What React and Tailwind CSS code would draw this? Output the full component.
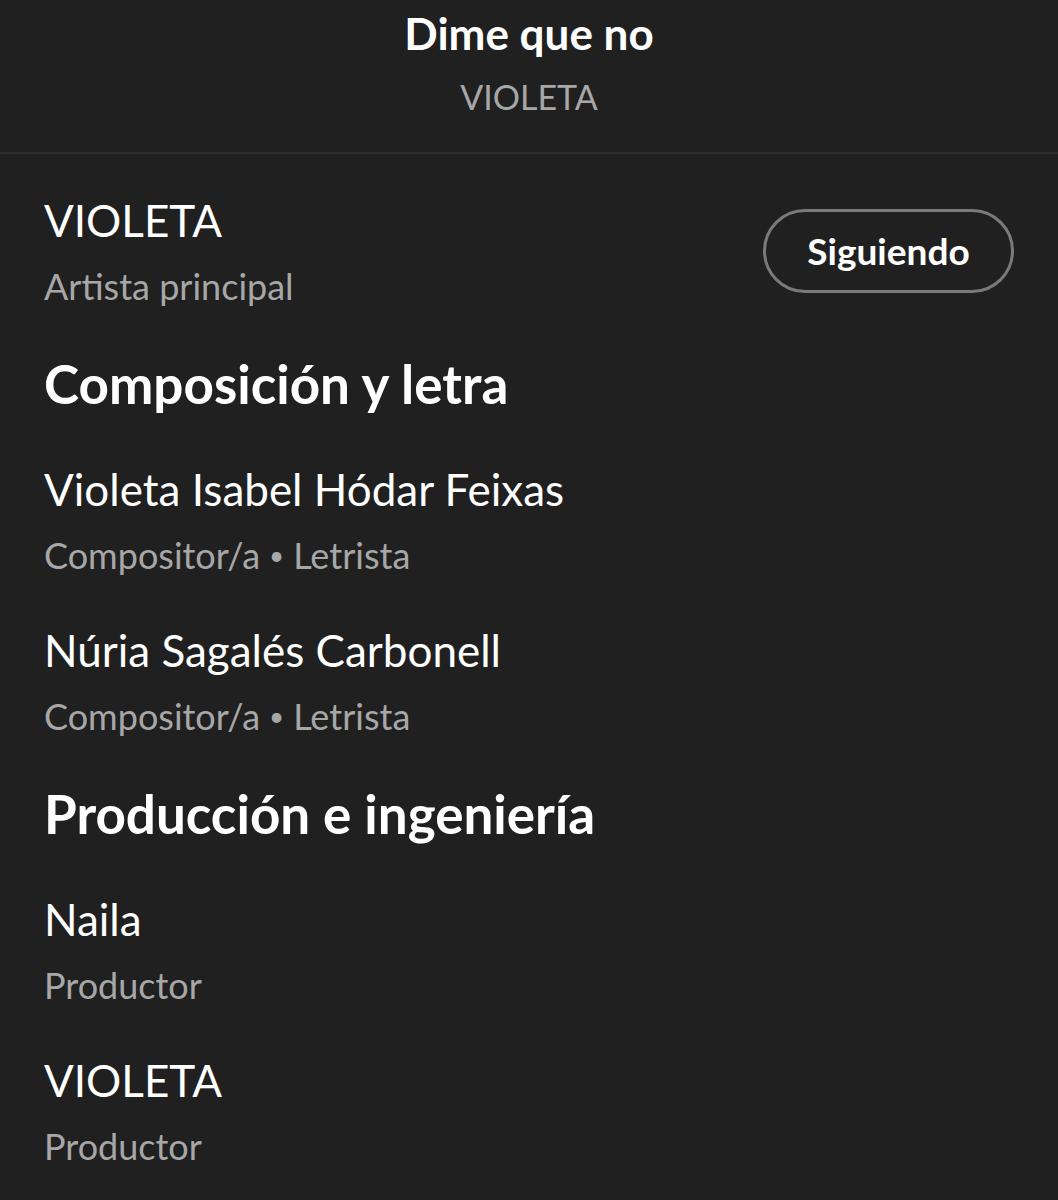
const credits = [
  {
    title: 'Composición y letra',
    people: [
      { name: 'Violeta Isabel Hódar Feixas', roles: ['Compositor/a', 'Letrista'] },
      { name: 'Núria Sagalés Carbonell', roles: ['Compositor/a', 'Letrista'] },
    ],
  },
  {
    title: 'Producción e ingeniería',
    people: [
      { name: 'Naila', roles: ['Productor'] },
      { name: 'VIOLETA', roles: ['Productor'] },
    ],
  },
]

function Person({ name, roles }) {
  return (
    <div className="flex flex-col">
      <div className="text-[44px] leading-[56px] text-white">{name}</div>
      <div className="text-[36px] leading-[48px] mt-[14px] text-[#a7a7a7] flex items-center">
        {roles.map((r, i) => (
          <span key={r} className="flex items-center">
            {i > 0 && <span className="text-[26px] mx-[9px]">•</span>}
            {r}
          </span>
        ))}
      </div>
    </div>
  )
}

export default function App() {
  return (
    <div className="bg-[#202020] min-h-[1200px] w-[1058px] overflow-hidden font-['Lato',sans-serif]">
      {/* Header */}
      <header className="flex flex-col items-center pt-[6px] pb-[31px] border-b-2 border-[#2c2c2c]">
        <h1 className="text-[44px] leading-[54px] font-bold text-white">Dime que no</h1>
        <p className="text-[34px] leading-[48px] mt-[13px] text-[#a7a7a7]">VIOLETA</p>
      </header>

      <main className="px-[44px] pt-[38px]">
        {/* Main artist */}
        <div className="flex items-center justify-between">
          <Person name="VIOLETA" roles={['Artista principal']} />
          <button className="h-[84px] w-[251px] rounded-full border-[3px] border-[#7a7a7a] text-white text-[37px] font-bold">
            Siguiendo
          </button>
        </div>

        {credits.map((section) => (
          <section key={section.title} className="mt-[42px]">
            <h2 className="text-[53px] leading-[64px] font-bold text-white">{section.title}</h2>
            <div className="flex flex-col gap-[43px] mt-[45px]">
              {section.people.map((p, i) => (
                <Person key={i} {...p} />
              ))}
            </div>
          </section>
        ))}
      </main>
    </div>
  )
}
